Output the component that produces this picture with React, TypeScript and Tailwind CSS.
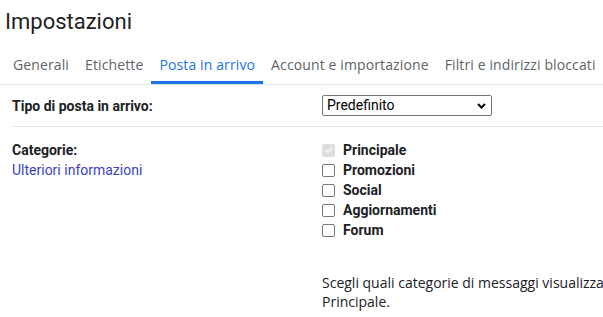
import React from "react";

const font = { fontFamily: "Roboto, 'Noto Sans', Arial, sans-serif" };
const tabFont = { fontFamily: "'Open Sans', Roboto, Arial, sans-serif" };

function Box({ checked }: { checked?: boolean }) {
  if (checked) {
    return (
      <span className="flex h-[13px] w-[13px] shrink-0 items-center justify-center rounded-[2px] bg-[#dedede]">
        <svg width="10" height="10" viewBox="0 0 10 10">
          <path d="M1.8 5.2 L4 7.3 L8.3 2.6" fill="none" stroke="#f4f4f4" strokeWidth="1.8" />
        </svg>
      </span>
    );
  }
  return <span className="block h-[13px] w-[13px] shrink-0 rounded-[2px] border border-[#767676] bg-white" />;
}

export default function App() {
  const tabs = ["Generali", "Etichette", "Posta in arrivo", "Account e importazione", "Filtri e indirizzi bloccati"];
  const cats = ["Principale", "Promozioni", "Social", "Aggiornamenti", "Forum"];
  return (
    <div className="h-[317px] w-[603px] overflow-hidden bg-white text-[#202124]" style={font}>
      <div className="pl-[5px] pt-[8px] text-[22px] leading-[28px] text-[#1f1f1f]">Impostazioni</div>
      <div className="mt-[19px] flex border-b border-[#e3e3e3] pl-[5px] whitespace-nowrap tracking-[0.12px]" style={tabFont}>
        {tabs.map((t, i) => (
          <div
            key={t}
            className={
              i === 2
                ? "border-b-[3px] border-[#1a73e8] px-[8px] pb-[7px] text-[14px] leading-[19px] text-[#1a73e8]"
                : "border-b-[3px] border-transparent px-[8px] pb-[7px] text-[14px] leading-[19px] text-[#5f6368]"
            }
          >
            {t}
          </div>
        ))}
      </div>
      <div className="ml-[12px] flex border-b border-[#e3e3e3] pt-[10px] pb-[10px]">
        <div className="w-[310px] shrink-0 pt-[2px] text-[14px] font-bold leading-[18px]">Tipo di posta in arrivo:</div>
        <div className="flex h-[21px] w-[170px] shrink-0 items-center justify-between rounded-[2px] border border-[#767676] pl-[4px] pr-[5px] text-[14px] text-black">
          <span>Predefinito</span>
          <svg width="9" height="6" viewBox="0 0 9 6">
            <path d="M1 1 L4.5 4.5 L8 1" fill="none" stroke="#000" strokeWidth="2" />
          </svg>
        </div>
      </div>
      <div className="ml-[12px] flex pt-[13px]">
        <div className="w-[310px] shrink-0 text-[14px] leading-[20px]">
          <div className="font-bold">Categorie:</div>
          <div className="whitespace-nowrap text-[#3c3fc4]">Ulteriori informazioni</div>
        </div>
        <div className="flex min-w-0 flex-1 flex-col">
          {cats.map((c, i) => (
            <div key={c} className="flex h-[20px] items-center gap-[8px]">
              <Box checked={i === 0} />
              <span className="text-[14px] font-bold leading-[20px]">{c}</span>
            </div>
          ))}
          <div className="mt-[33px] text-[14px] leading-[19px] text-[#202124]" style={tabFont}>
            <div className="whitespace-nowrap">Scegli quali categorie di messaggi visualizza</div>
            <div>Principale.</div>
          </div>
        </div>
      </div>
    </div>
  );
}
